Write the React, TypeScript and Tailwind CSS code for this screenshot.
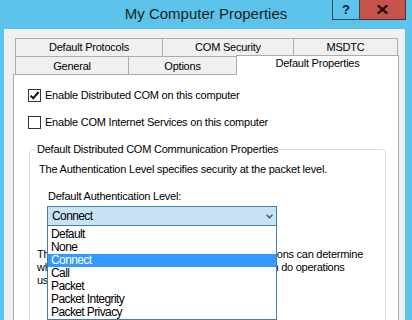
export default function App() {
  const items = ["Default", "None", "Connect", "Call", "Packet", "Packet Integrity", "Packet Privacy"];
  return (
    <div className="w-[412px] h-[320px] overflow-hidden bg-[#5cc3ea] flex flex-col font-['Liberation_Sans',Arial,sans-serif] text-black">
      {/* Title bar */}
      <div className="h-[29px] shrink-0 grid grid-cols-[1fr_auto_1fr]">
        <div />
        <div className="pt-[3px] text-[15px] leading-[22px] text-[#1e1e1e] whitespace-nowrap">My Computer Properties</div>
        <div className="flex justify-end items-start pr-[6px]">
          <div className="w-[28px] h-[20px] border border-t-0 border-[#2c4a5e] flex items-center justify-center text-[13px] font-bold leading-none text-[#15213d]">?</div>
          <div className="w-[46px] h-[20px] bg-[#c7544c] border-b border-r border-[#5b2b28] flex items-center justify-center">
            <svg width="11" height="9" viewBox="0 0 11 9">
              <path d="M1.5 1 L9.5 8 M9.5 1 L1.5 8" stroke="#2a1312" strokeWidth="2.4" strokeLinecap="square" />
            </svg>
          </div>
        </div>
      </div>

      {/* Client area */}
      <div className="flex-1 ml-[4px] w-[401px] bg-[#f0f0f0] pt-[9px] pl-[9px] text-[11px] tracking-[-0.22px]">
        {/* Tabs top row */}
        <div className="ml-[2px] flex h-[18px]">
          <div className="w-[147px] border-t border-l border-[#acacac] flex items-center justify-center leading-[13px]">Default Protocols</div>
          <div className="w-[131px] border-t border-l border-[#acacac] flex items-center justify-center leading-[13px]">COM Security</div>
          <div className="w-[105px] border-t border-l border-r border-[#acacac] flex items-center justify-center leading-[13px]">MSDTC</div>
        </div>
        {/* Tabs bottom row */}
        <div className="ml-[2px] flex h-[18px]">
          <div className="w-[113px] border-t border-l border-[#acacac] flex items-center justify-center leading-[13px] pt-[1px]">General</div>
          <div className="w-[108px] border-t border-l border-[#acacac] flex items-center justify-center leading-[13px] pt-[1px]">Options</div>
          <div className="relative z-10 w-[163px] h-[20px] -mt-px bg-white border-t border-l border-r border-[#acacac] flex justify-center pt-[1px] leading-[13px]">Default Properties</div>
        </div>

        {/* Page */}
        <div className="w-[386px] h-[260px] border border-[#acacac] bg-white pl-[14px] pt-[14px]">
          <div className="flex items-center h-[13px] gap-[4px]">
            <div className="w-[13px] h-[13px] border border-[#333333] bg-white flex items-center justify-center">
              <svg width="11" height="11" viewBox="0 0 11 11">
                <path d="M1.6 5.6 L4.2 8.3 L9.6 2" stroke="#111111" strokeWidth="2" fill="none" />
              </svg>
            </div>
            <span className="leading-[13px] whitespace-nowrap">Enable Distributed COM on this computer</span>
          </div>
          <div className="flex items-center h-[13px] gap-[4px] mt-[14px]">
            <div className="w-[13px] h-[13px] border border-[#333333] bg-white" />
            <span className="leading-[13px] whitespace-nowrap">Enable COM Internet Services on this computer</span>
          </div>

          <fieldset className="mt-[14px] ml-px w-[357px] h-[200px] border border-[#dcdcdc] rounded-[3px]">
            <legend className="ml-[5px] px-[2px] leading-[13px] whitespace-nowrap">Default Distributed COM Communication Properties</legend>
            <div className="pl-[9px] pt-[7px]">
              <div className="leading-[13px] whitespace-nowrap">The Authentication Level specifies security at the packet level.</div>
              <div className="mt-[14px] ml-[9px] leading-[13px] whitespace-nowrap">Default Authentication Level:</div>
              <div className="relative mt-[3px] ml-[8px] w-[230px] h-[20px] border border-[#3c7fb1] bg-[#c9e3f6] flex items-center pl-[4px] text-[12px] tracking-[-0.6px]">
                <span className="leading-[14px]">Connect</span>
                <svg className="ml-auto mr-[3px]" width="7" height="5" viewBox="0 0 7 5">
                  <path d="M0.6 0.8 L3.5 3.8 L6.4 0.8" stroke="#5a5a5a" strokeWidth="1.5" fill="none" />
                </svg>
                <div className="absolute left-[-1px] top-full mt-px w-[230px] bg-white border-l border-r border-b border-[#3c7fb1] pt-[2px] z-10">
                  {items.map((it) => (
                    <div
                      key={it}
                      className={
                        it === "Connect"
                          ? "h-[13px] leading-[13px] pl-[3px] bg-[#3399ff] text-white whitespace-nowrap"
                          : "h-[13px] leading-[13px] pl-[3px] text-black whitespace-nowrap"
                      }
                    >
                      {it}
                    </div>
                  ))}
                </div>
              </div>
              <div className="mt-[22px] -ml-[2px] leading-[13px] whitespace-nowrap tracking-[-0.25px]">
                <div>The Impersonation Level specifies whether applications can determine</div>
                <div>who is calling them, and whether the application can do operations</div>
                <div>using the client&apos;s identity.</div>
              </div>
            </div>
          </fieldset>
        </div>
      </div>
    </div>
  );
}
